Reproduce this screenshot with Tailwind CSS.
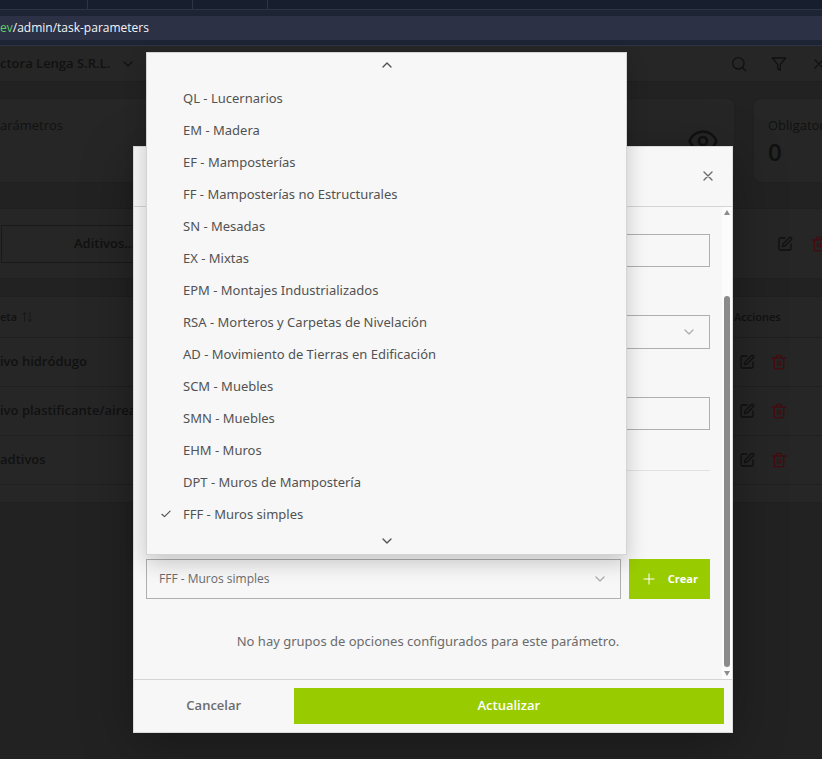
<!DOCTYPE html>
<html lang="es">
<head>
<meta charset="utf-8">
<meta name="viewport" content="width=device-width, initial-scale=1">
<title>Parámetros de tareas</title>
<script src="https://cdn.jsdelivr.net/npm/@tailwindcss/browser@4"></script>
</head>
<body class="relative flex min-h-screen flex-col overflow-hidden bg-[#222222] font-['Open_Sans','Noto_Sans',sans-serif] text-[13px] text-[#111111]">
<svg class="hidden" aria-hidden="true">
  <symbol id="down" viewBox="0 0 24 24" fill="none" stroke="currentColor" stroke-width="2" stroke-linecap="round" stroke-linejoin="round"><path d="m6 9 6 6 6-6"/></symbol>
  <symbol id="up" viewBox="0 0 24 24" fill="none" stroke="currentColor" stroke-width="2" stroke-linecap="round" stroke-linejoin="round"><path d="m18 15-6-6-6 6"/></symbol>
  <symbol id="close" viewBox="0 0 24 24" fill="none" stroke="currentColor" stroke-width="2" stroke-linecap="round" stroke-linejoin="round"><path d="M18 6 6 18M6 6l12 12"/></symbol>
  <symbol id="edit" viewBox="0 0 24 24" fill="none" stroke="currentColor" stroke-width="2" stroke-linecap="round" stroke-linejoin="round"><path d="M12 3H5a2 2 0 0 0-2 2v14a2 2 0 0 0 2 2h14a2 2 0 0 0 2-2v-7"/><path d="M18.375 2.625a1 1 0 0 1 3 3l-9.013 9.014a2 2 0 0 1-.853.505l-2.873.84a.5.5 0 0 1-.62-.62l.84-2.873a2 2 0 0 1 .506-.852z"/></symbol>
  <symbol id="trash" viewBox="0 0 24 24" fill="none" stroke="currentColor" stroke-width="2" stroke-linecap="round" stroke-linejoin="round"><path d="M2 6h20M19 6v15a1 1 0 0 1-1 1H6a1 1 0 0 1-1-1V6M8 6V4a2 2 0 0 1 2-2h4a2 2 0 0 1 2 2v2M10 11v6M14 11v6"/></symbol>
</svg>

<div class="border-b border-[#2b3546] bg-[#1d2433]">
  <div class="flex h-[10px] border-b border-[#2b3546] bg-[#171e2d]">
    <span class="w-[88px] border-r border-[#2b3546]"></span>
    <span class="w-[105px] border-r border-[#2b3546]"></span>
    <span class="w-[75px] border-r border-[#2b3546]"></span>
  </div>
  <div class="py-[6px] pb-[5px]">
    <p class="bg-[#2c3146] text-[12px] leading-6 text-[#f4f5f8]"><span class="text-[#5fd068]">ev</span>/admin/task-parameters</p>
  </div>
</div>

<header class="flex h-9 items-center justify-between border-b border-[#1f1f1f] bg-[#262626]">
  <button class="flex items-center gap-[10px] text-[13px] font-semibold">ctora Lenga S.R.L. <svg class="size-4"><use href="#down"/></svg></button>
  <nav class="-mr-[17px] flex">
    <button class="flex w-10 justify-center" aria-label="Buscar"><svg class="size-4" viewBox="0 0 24 24" fill="none" stroke="currentColor" stroke-width="2" stroke-linecap="round"><circle cx="11" cy="11" r="8.500"/><path d="m17.500 17.500 4.500 4.500"/></svg></button>
    <button class="flex w-10 justify-center" aria-label="Filtrar"><svg class="size-4" viewBox="0 0 24 24" fill="none" stroke="currentColor" stroke-width="2" stroke-linejoin="round"><path d="M22 3H2l8 9.460V19l4 2.500v-9.040z"/></svg></button>
    <button class="flex w-10 justify-center" aria-label="Cerrar filtros"><svg class="size-4"><use href="#close"/></svg></button>
  </nav>
</header>

<main class="flex flex-col pt-4">
  <section class="-mr-16 grid grid-cols-[300px_1fr_133px] gap-[18px]">
    <div class="h-[85px] rounded-r-lg border border-l-0 border-[#202020] bg-[#262626] pt-4 leading-5">arámetros</div>
    <div class="flex items-center justify-end rounded-lg border border-[#202020] bg-[#262626] pr-[15px]">
      <svg class="size-8" viewBox="0 0 24 24" fill="none" stroke="currentColor" stroke-width="2" stroke-linecap="round" stroke-linejoin="round"><path d="M2.062 12.348a1 1 0 0 1 0-.696 10.750 10.750 0 0 1 19.876 0 1 1 0 0 1 0 .696 10.750 10.750 0 0 1-19.876 0"/><circle cx="12" cy="12" r="3"/></svg>
    </div>
    <div class="rounded-lg border border-[#202020] bg-[#262626] px-[14px] pt-4">
      <p class="leading-5">Obligatorios</p>
      <p class="text-[24px] font-semibold leading-[34px]">0</p>
    </div>
  </section>

  <section class="mt-[25px] flex h-[71px] items-center justify-between border-y border-[#202020] bg-[#262626]">
    <button class="ml-px h-[38px] w-[300px] border border-[#191919] pl-[72px] text-left text-[13px] font-semibold">Aditivos...</button>
    <div class="-mr-[5px] flex gap-[18px]">
      <button aria-label="Editar"><svg class="size-4"><use href="#edit"/></svg></button>
      <button class="text-[#430c10]" aria-label="Eliminar"><svg class="size-4"><use href="#trash"/></svg></button>
    </div>
  </section>

  <section class="mt-[17px] border-y border-[#202020] bg-[#262626] pb-[17px]">
    <table class="w-full text-left">
      <thead>
        <tr class="h-10 border-b border-[#1f1f1f] text-[11px]">
          <th class="font-semibold"><span class="flex items-center gap-1">eta <svg class="h-3 w-3 text-[#191919]" viewBox="0 0 12 12" fill="none" stroke="currentColor"><path d="M3.500 11V1.500M1 4l2.500-2.500L6 4M9 1v9.500M6.500 8 9 10.500 11.500 8"/></svg></span></th>
          <th class="w-[88px] font-semibold">Acciones</th>
        </tr>
      </thead>
      <tbody class="font-semibold">
        <tr class="h-[49px] border-b border-[#1f1f1f]"><td>ivo hidródugo</td><td><div class="flex gap-4 pl-[5px]"><button aria-label="Editar"><svg class="size-4"><use href="#edit"/></svg></button><button class="text-[#430c10]" aria-label="Eliminar"><svg class="size-4"><use href="#trash"/></svg></button></div></td></tr>
        <tr class="h-[49px] border-b border-[#1f1f1f]"><td>ivo plastificante/aireante</td><td><div class="flex gap-4 pl-[5px]"><button aria-label="Editar"><svg class="size-4"><use href="#edit"/></svg></button><button class="text-[#430c10]" aria-label="Eliminar"><svg class="size-4"><use href="#trash"/></svg></button></div></td></tr>
        <tr class="h-[49px] border-b border-[#1f1f1f]"><td>adtivos</td><td><div class="flex gap-4 pl-[5px]"><button aria-label="Editar"><svg class="size-4"><use href="#edit"/></svg></button><button class="text-[#430c10]" aria-label="Eliminar"><svg class="size-4"><use href="#trash"/></svg></button></div></td></tr>
      </tbody>
    </table>
  </section>
</main>

<div class="absolute inset-x-0 top-0 pt-[146px] pr-[89px] pl-[133px]">
  <div role="dialog" aria-modal="true" aria-label="Editar parámetro" class="border border-[#dadada] bg-[#f7f7f7] text-[#6b6b6b] shadow-[0_10px_50px_rgba(0,0,0,0.3)]">
    <div class="flex h-[60px] items-center justify-end border-b border-[#d4d4d4] pr-4 pb-0.5">
      <button aria-label="Cerrar"><svg class="size-4"><use href="#close"/></svg></button>
    </div>
    <div class="flex">
      <form class="flex-1 px-3 py-7 pt-[27px]">
        <input aria-label="Nombre" class="block h-[33px] w-full border border-[#afafaf] px-3">
        <div class="relative mt-12">
          <select aria-label="Tipo" class="block h-[34px] w-full appearance-none border border-[#afafaf] px-3"><option></option></select>
          <svg class="pointer-events-none absolute top-[9px] right-[13px] size-4 text-[#afafaf]"><use href="#down"/></svg>
        </div>
        <input aria-label="Unidad" class="mt-12 block h-[33px] w-full border border-[#afafaf] px-3">
        <hr class="mt-10 border-[#e2e2e2]">
        <div class="mt-[88px] flex gap-2">
          <div class="relative flex-1">
            <select aria-label="Grupo de opciones" class="block h-10 w-full appearance-none border border-[#afafaf] px-3 text-[12px]"><option>FFF - Muros simples</option></select>
            <svg class="pointer-events-none absolute top-3 right-[13px] size-4 text-[#afafaf]"><use href="#down"/></svg>
            <div class="absolute bottom-full left-0 -right-[6px] mb-1 border border-[#d4d4d4] bg-[#f7f7f7] pb-0.5 text-[#525252] shadow-[0_8px_20px_rgba(0,0,0,0.2)]">
              <button type="button" class="flex h-6 w-full items-center justify-center" aria-label="Subir"><svg class="size-4"><use href="#up"/></svg></button>
              <ul role="listbox" aria-label="Opciones" class="pt-[5px] font-['Noto_Sans','Open_Sans',sans-serif] leading-8">
                <li role="option" class="pl-9">QL - Lucernarios</li>
                <li role="option" class="pl-9">EM - Madera</li>
                <li role="option" class="pl-9">EF - Mamposterías</li>
                <li role="option" class="pl-9">FF - Mamposterías no Estructurales</li>
                <li role="option" class="pl-9">SN - Mesadas</li>
                <li role="option" class="pl-9">EX - Mixtas</li>
                <li role="option" class="pl-9">EPM - Montajes Industrializados</li>
                <li role="option" class="pl-9">RSA - Morteros y Carpetas de Nivelación</li>
                <li role="option" class="pl-9">AD - Movimiento de Tierras en Edificación</li>
                <li role="option" class="pl-9">SCM - Muebles</li>
                <li role="option" class="pl-9">SMN - Muebles</li>
                <li role="option" class="pl-9">EHM - Muros</li>
                <li role="option" class="pl-9">DPT - Muros de Mampostería</li>
                <li role="option" aria-selected="true" class="flex items-center gap-[10px] pl-3"><svg class="size-[14px]" viewBox="0 0 24 24" fill="none" stroke="currentColor" stroke-width="2" stroke-linecap="round" stroke-linejoin="round"><path d="M19 7 9.500 16.500l-4.500-4"/></svg>FFF - Muros simples</li>
              </ul>
              <button type="button" class="flex h-[22px] w-full items-center justify-center" aria-label="Bajar"><svg class="size-4"><use href="#down"/></svg></button>
            </div>
          </div>
          <button type="button" class="flex h-10 w-[81px] items-center justify-between bg-[#99cc00] px-3 text-[11px] font-bold text-white"><svg class="size-4" viewBox="0 0 16 16" fill="none" stroke="currentColor"><path d="M8 2.500v11M2.500 8h11"/></svg>Crear</button>
        </div>
        <p class="mt-8 text-center font-['Noto_Sans','Open_Sans',sans-serif] leading-5">No hay grupos de opciones configurados para este parámetro.</p>
      </form>
      <div class="flex w-[10px] flex-col items-center bg-[#fcfcfc] py-[3px]" aria-hidden="true">
        <svg class="h-[5px] w-[6px]" viewBox="0 0 6 5" fill="#8b8b8b"><path d="M3 0 6 5H0z"/></svg>
        <span class="mt-[81px] mb-1 w-[6px] flex-1 rounded-full bg-[#8b8b8b]"></span>
        <svg class="h-[5px] w-[6px]" viewBox="0 0 6 5" fill="#8b8b8b"><path d="M0 0h6L3 5z"/></svg>
      </div>
    </div>
    <div class="flex gap-2 border-t border-[#d4d4d4] p-2 font-semibold">
      <button class="h-9 flex-1">Cancelar</button>
      <button class="h-9 flex-[3] bg-[#99cc00] text-white">Actualizar</button>
    </div>
  </div>
</div>
</body>
</html>
